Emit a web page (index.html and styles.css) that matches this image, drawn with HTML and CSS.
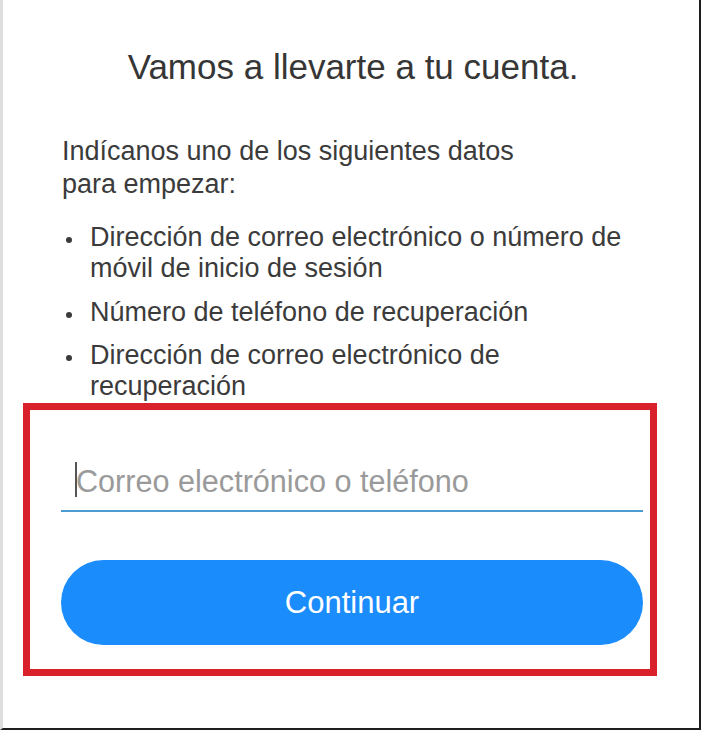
FILE: index.html
```html
<!DOCTYPE html>
<html lang="es">
<head>
<meta charset="utf-8">
<title>Vamos a llevarte a tu cuenta</title>
<link rel="stylesheet" href="styles.css">
</head>
<body>
<div class="frame">
  <h1 class="title">Vamos a llevarte a tu cuenta.</h1>
  <p class="intro">Indícanos uno de los siguientes datos<br>para empezar:</p>
  <ul class="options">
    <li>Dirección de correo electrónico o número de móvil de inicio de sesión</li>
    <li>Número de teléfono de recuperación</li>
    <li>Dirección de correo electrónico de recuperación</li>
  </ul>
  <div class="highlight">
    <div class="field">
      <span class="caret"></span>
      <input class="input" type="text" placeholder="Correo electrónico o teléfono">
    </div>
    <button class="btn" type="button">Continuar</button>
  </div>
</div>
</body>
</html>
```

FILE: styles.css
```css
html, body {
  margin: 0;
  padding: 0;
  background: #ffffff;
}

.frame {
  box-sizing: border-box;
  width: 701px;
  height: 730px;
  border-left: 3px solid #dedede;
  border-right: 2px solid #1e1e1e;
  border-bottom: 2px solid #1e1e1e;
  font-family: "Liberation Sans", Arial, sans-serif;
  color: #3b3b3b;
  overflow: hidden;
}

.title {
  margin: 47px 0 0 0;
  font-size: 35px;
  line-height: 40px;
  font-weight: normal;
  text-align: center;
  color: #363636;
  padding-left: 4px;
}

.intro {
  margin: 48px 0 0 59px;
  font-size: 27px;
  line-height: 33px;
}

.options {
  list-style: none;
  margin: 21px 0 0 59px;
  padding: 0;
  width: 560px;
  font-size: 27px;
  line-height: 31px;
}

.options li {
  position: relative;
  padding-left: 28px;
  margin-top: 12.5px;
}

.options li:first-child {
  margin-top: 0;
}

.options li::before {
  content: "";
  position: absolute;
  left: 4px;
  top: 15px;
  width: 6px;
  height: 6px;
  border-radius: 50%;
  background: #3b3b3b;
}

.highlight {
  box-sizing: border-box;
  width: 634px;
  height: 273px;
  margin: 1px 0 0 20px;
  border: 7px solid #d9212b;
  padding: 42px 7px 24px 31px;
}

.field {
  position: relative;
}

.input {
  display: block;
  box-sizing: border-box;
  width: 582px;
  height: 60px;
  margin: 0;
  padding: 0 0 0 15px;
  border: none;
  border-bottom: 2px solid #4e9bd2;
  outline: none;
  background: transparent;
  font-family: "Liberation Sans", Arial, sans-serif;
  font-size: 30.6px;
  color: #333333;
}

.input::placeholder {
  color: #9a9a9a;
  opacity: 1;
}

.caret {
  position: absolute;
  left: 14px;
  top: 10px;
  width: 2px;
  height: 35px;
  background: #555555;
}

.btn {
  display: block;
  width: 582px;
  height: 85px;
  margin: 48px 0 0 0;
  border: none;
  border-radius: 43px;
  background: #1b8cfb;
  color: #ffffff;
  font-family: "Liberation Sans", Arial, sans-serif;
  font-size: 31px;
  padding: 0;
}
```
